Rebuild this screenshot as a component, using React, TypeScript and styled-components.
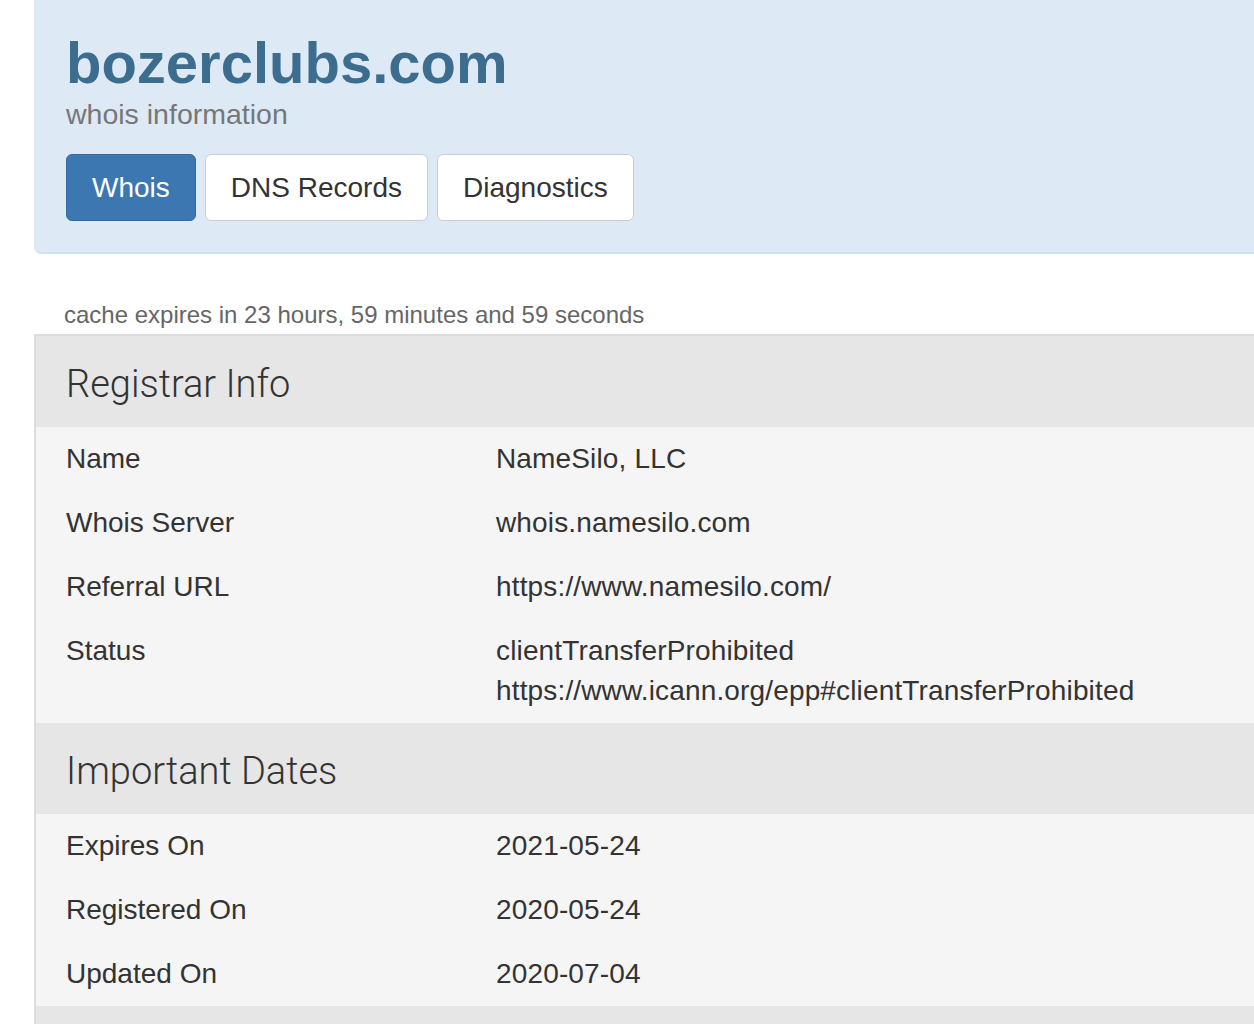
import styled, { createGlobalStyle } from 'styled-components'

const GlobalStyle = createGlobalStyle`
  html, body {
    margin: 0;
    padding: 0;
    background: #ffffff;
    overflow: hidden;
  }
  body {
    font-family: 'Liberation Sans', Arial, sans-serif;
    color: #333333;
  }
`

type Row = { label: string; values: string[] }
type Section = { title: string; rows: Row[] }

const sections: Section[] = [
  {
    title: 'Registrar Info',
    rows: [
      { label: 'Name', values: ['NameSilo, LLC'] },
      { label: 'Whois Server', values: ['whois.namesilo.com'] },
      { label: 'Referral URL', values: ['https://www.namesilo.com/'] },
      {
        label: 'Status',
        values: ['clientTransferProhibited', 'https://www.icann.org/epp#clientTransferProhibited']
      }
    ]
  },
  {
    title: 'Important Dates',
    rows: [
      { label: 'Expires On', values: ['2021-05-24'] },
      { label: 'Registered On', values: ['2020-05-24'] },
      { label: 'Updated On', values: ['2020-07-04'] }
    ]
  }
]

const tabs = ['Whois', 'DNS Records', 'Diagnostics']

const App = () => (
  <>
    <GlobalStyle />
    <Page>
      <Jumbotron>
        <DomainTitle>bozerclubs.com</DomainTitle>
        <Subtitle>whois information</Subtitle>
        <TabRow>
          {tabs.map((tab, i) => (
            <TabButton key={tab} active={i === 0}>
              {tab}
            </TabButton>
          ))}
        </TabRow>
      </Jumbotron>
      <CacheNote>cache expires in 23 hours, 59 minutes and 59 seconds</CacheNote>
      <InfoPanel>
        {sections.map((section) => (
          <div key={section.title}>
            <SectionHeader>{section.title}</SectionHeader>
            <SectionBody>
              {section.rows.map((row) => (
                <InfoRow key={row.label}>
                  <Label>{row.label}</Label>
                  <Value>
                    {row.values.map((v) => (
                      <div key={v}>{v}</div>
                    ))}
                  </Value>
                </InfoRow>
              ))}
            </SectionBody>
          </div>
        ))}
        {/* next section begins just below the fold */}
        <SectionHeader />
      </InfoPanel>
    </Page>
  </>
)

export default App

const Page = styled.div`
  margin-left: 34px;
  width: 1260px;
`

const Jumbotron = styled.div`
  background-color: #dde9f5;
  border-bottom: 2px solid #d0e2f0;
  border-bottom-left-radius: 8px;
  padding: 31px 32px 31px;
`

const DomainTitle = styled.h1`
  margin: 0;
  font-size: 58px;
  line-height: 64px;
  font-weight: 700;
  color: #3c6d8e;
`

const Subtitle = styled.div`
  margin-top: 2px;
  font-size: 28.5px;
  line-height: 34px;
  color: #777777;
`

const TabRow = styled.div`
  display: flex;
  gap: 9px;
  margin-top: 23px;
`

const TabButton = styled.div<{ active?: boolean }>`
  padding: 13px 25px 12px;
  font-size: 28px;
  line-height: 40px;
  border-radius: 6px;
  border: 1px solid ${({ active }) => (active ? '#2f6aa2' : '#cccccc')};
  background-color: ${({ active }) => (active ? '#3c77b1' : '#ffffff')};
  color: ${({ active }) => (active ? '#ffffff' : '#333333')};
`

const CacheNote = styled.div`
  margin: 46px 0 4px;
  padding-left: 30px;
  font-size: 24px;
  line-height: 30px;
  color: #666666;
`

const InfoPanel = styled.div`
  border-top: 2px solid #dddddd;
  border-left: 2px solid #dddddd;
`

const SectionHeader = styled.div`
  height: 91px;
  box-sizing: border-box;
  padding: 26px 30px 0;
  background-color: #e6e6e6;
  font-family: Roboto, 'Liberation Sans', sans-serif;
  font-weight: 300;
  font-size: 38px;
  line-height: 44px;
  color: #333333;
`

const SectionBody = styled.div`
  background-color: #f5f5f5;
`

const InfoRow = styled.div`
  display: grid;
  grid-template-columns: 430px 1fr;
  padding: 12px 30px;
  font-size: 28px;
  line-height: 40px;
  color: #333333;
`

const Label = styled.div``

const Value = styled.div`
  letter-spacing: 0.15px;
`
